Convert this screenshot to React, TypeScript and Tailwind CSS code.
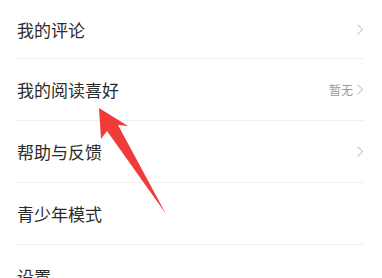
import React from 'react'

const FONT = { fontFamily: '"Noto Sans CJK SC", "Noto Sans", sans-serif' }

interface RowItem {
    label: string
    extra?: string
    arrow?: boolean
    height: string
}

const ROWS: RowItem[] = [
    { label: '我的评论', arrow: true, height: 'h-[59px]' },
    { label: '我的阅读喜好', extra: '暂无', arrow: true, height: 'h-[62px]' },
    { label: '帮助与反馈', arrow: true, height: 'h-[62px]' },
    { label: '青少年模式', height: 'h-[62px]' },
    { label: '设置', height: 'h-[62px]' },
]

function Chevron() {
    return (
        <svg width="7" height="11" viewBox="0 0 7 11" className="ml-[4px]">
            <path d="M1 1 L5.5 5.5 L1 10" fill="none" stroke="#cfcfcf" strokeWidth="1.3" strokeLinecap="round" strokeLinejoin="round" />
        </svg>
    )
}

export default function App() {
    return (
        <div className="relative w-[382px] h-[278px] overflow-hidden bg-white" style={FONT}>
            <div className="flex flex-col">
                {ROWS.map((row, i) => (
                    <div key={row.label} className={`${row.height} ml-[15px] mr-[18px] flex items-center ${i < ROWS.length - 1 ? 'border-b border-[#f0f0f0]' : ''}`}>
                        <div className="pl-[2px] text-[17px] text-[#2b2b2b] leading-none">{row.label}</div>
                        <div className="ml-auto flex items-center">
                            {row.extra && <span className="text-[12px] text-[#9a9a9a] leading-none">{row.extra}</span>}
                            {row.arrow && <Chevron />}
                        </div>
                    </div>
                ))}
            </div>
            <svg className="absolute left-0 top-0" width="382" height="278" viewBox="0 0 382 278">
                <polygon points="99,108 128,126 118,125 166,214 107,131 101,139" fill="#f03b3b" />
            </svg>
        </div>
    )
}
